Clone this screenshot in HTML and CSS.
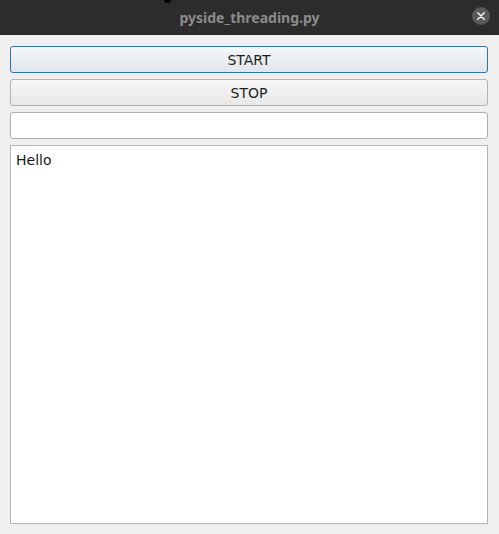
FILE: index.html
```html
<!DOCTYPE html>
<html>
<head>
<meta charset="utf-8">
<link rel="stylesheet" href="styles.css">
</head>
<body>
<div class="window">
  <div class="titlebar">
    <span class="cursor"></span>
    <span class="title">pyside_threading.py</span>
    <span class="close">
      <svg width="18" height="18" viewBox="0 0 18 18"><circle cx="9" cy="9" r="9" fill="#5a5858"/><path d="M5.8 5.8 L12.2 12.2 M12.2 5.8 L5.8 12.2" stroke="#f0f0f0" stroke-width="1.6" stroke-linecap="round"/></svg>
    </span>
  </div>
  <div class="content">
    <button class="btn btn-default">START</button>
    <button class="btn">STOP</button>
    <input class="line" type="text">
    <div class="log">Hello</div>
  </div>
</div>
</body>
</html>
```
FILE: styles.css
```css
html, body {
  margin: 0;
  padding: 0;
  background: #efefef;
}
.window {
  width: 499px;
  height: 534px;
  display: flex;
  flex-direction: column;
  font-family: "DejaVu Sans", sans-serif;
}
.titlebar {
  position: relative;
  height: 35px;
  flex: none;
  background: #2d2b2b;
  display: flex;
  align-items: center;
  justify-content: center;
}
.title {
  color: #8c8c8c;
  font-family: "Noto Sans", sans-serif;
  font-weight: bold;
  font-size: 14px;
  margin-top: -1px;
}
.close {
  position: absolute;
  right: 9px;
  top: 7px;
  width: 18px;
  height: 18px;
  display: block;
}
.close svg { display: block; }
.cursor {
  position: absolute;
  left: 164px;
  top: -3px;
  width: 7px;
  height: 6px;
  border-radius: 50%;
  background: #000;
}
.content {
  flex: 1;
  display: flex;
  flex-direction: column;
  gap: 6px;
  padding: 11px 11px 10px 10px;
  min-height: 0;
}
.btn {
  height: 27px;
  flex: none;
  box-sizing: border-box;
  margin: 0;
  border: 1px solid #b3b3b3;
  border-radius: 3px;
  background: linear-gradient(#f7f7f7, #e8e8e8);
  font-family: "DejaVu Sans", sans-serif;
  font-size: 14px;
  color: #1e1e1e;
  padding: 1px 0 0 0;
  line-height: 24px;
}
.btn-default {
  border-color: #2e72ab;
  background: linear-gradient(#f5f7f9, #e1e6ea);
}
.line {
  height: 27px;
  flex: none;
  box-sizing: border-box;
  margin: 0;
  border: 1px solid #b0b0b0;
  border-radius: 3px;
  background: #fff;
  padding: 0 5px;
  outline: none;
}
.log {
  flex: 1;
  background: #fff;
  border: 1px solid #b4b4b4;
  padding: 4px 5px 3px 5px;
  font-size: 14px;
  color: #1a1a1a;
  line-height: 20px;
}
```
